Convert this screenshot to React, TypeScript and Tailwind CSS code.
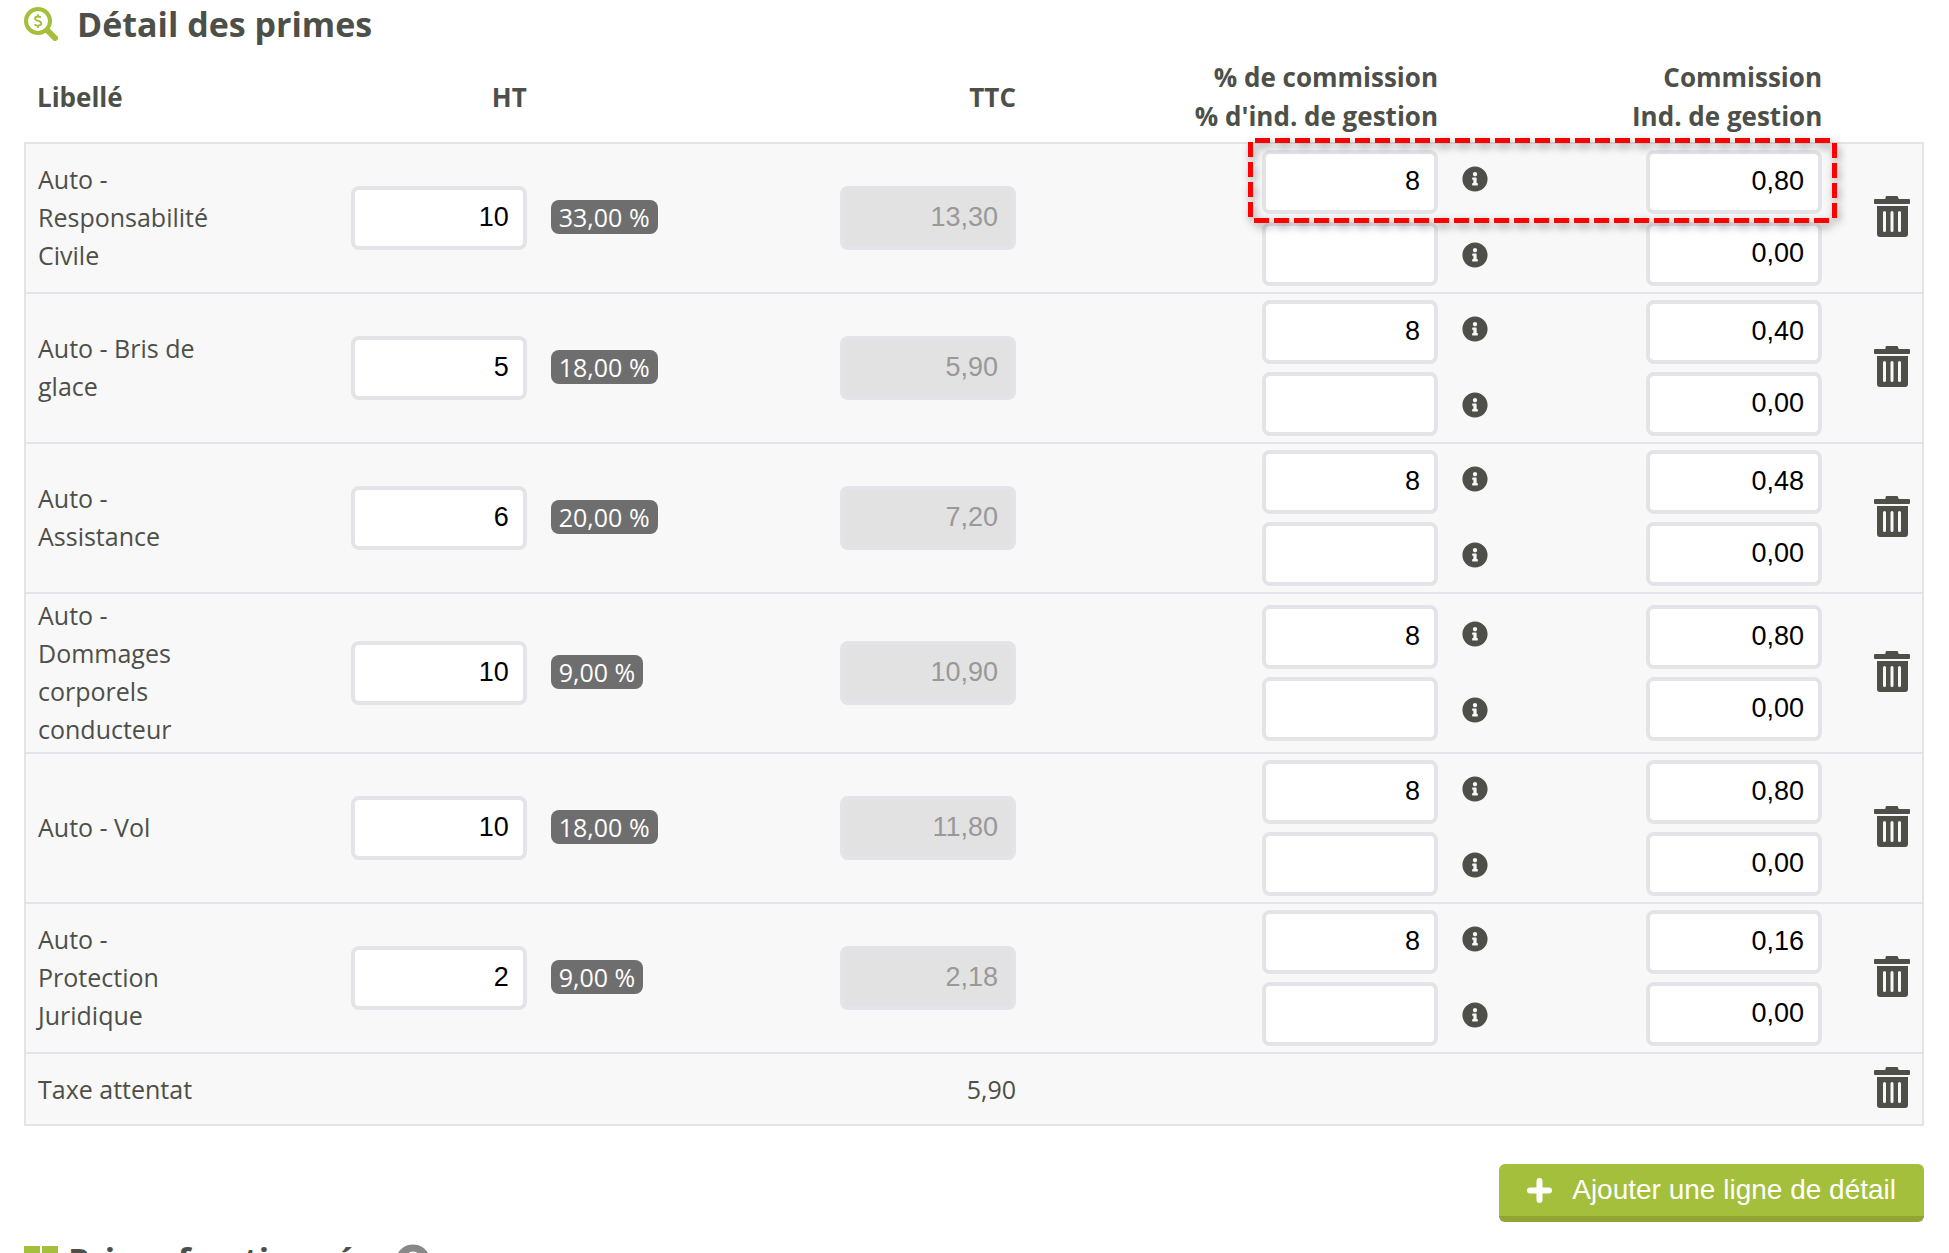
import React from "react";

type Line = {
  label: string;
  ht: string;
  rate: string;
  ttc: string;
  percent: string;
  commission: string;
  fee: string;
};

const LINES: Line[] = [
  { label: "Auto - Responsabilité Civile", ht: "10", rate: "33,00 %", ttc: "13,30", percent: "8", commission: "0,80", fee: "0,00" },
  { label: "Auto - Bris de glace", ht: "5", rate: "18,00 %", ttc: "5,90", percent: "8", commission: "0,40", fee: "0,00" },
  { label: "Auto - Assistance", ht: "6", rate: "20,00 %", ttc: "7,20", percent: "8", commission: "0,48", fee: "0,00" },
  { label: "Auto - Dommages corporels conducteur", ht: "10", rate: "9,00 %", ttc: "10,90", percent: "8", commission: "0,80", fee: "0,00" },
  { label: "Auto - Vol", ht: "10", rate: "18,00 %", ttc: "11,80", percent: "8", commission: "0,80", fee: "0,00" },
  { label: "Auto - Protection Juridique", ht: "2", rate: "9,00 %", ttc: "2,18", percent: "8", commission: "0,16", fee: "0,00" },
];

function SearchDollarIcon() {
  return (
    <svg className="size-[34px] shrink-0" viewBox="0 0 34 34" fill="none" aria-hidden="true">
      <path d="M23 23l8 8" stroke="#a4bf3b" strokeWidth="6" strokeLinecap="round" />
      <circle cx="14" cy="14" r="12" fill="white" stroke="#a4bf3b" strokeWidth="4" />
      <path
        d="M17 10.500c-.8-.8-1.800-1-3-1-1.900 0-3 .8-3 2.100 0 3 6.300 1.500 6.300 4.700 0 1.500-1.300 2.300-3.300 2.300-1.400 0-2.600-.4-3.400-1.300M14 7.200v2.300M14 18.600v2.300"
        stroke="#a4bf3b"
        strokeWidth="1.800"
      />
    </svg>
  );
}

function InfoIcon() {
  return (
    <svg className="size-[26px]" viewBox="0 0 512 512" aria-hidden="true">
      <path
        fill="#4d4f48"
        d="M256 8C119 8 8 119.100 8 256c0 137 111 248 248 248s248-111 248-248C504 119.100 393 8 256 8zm0 110c23.200 0 42 18.800 42 42s-18.800 42-42 42-42-18.800-42-42 18.800-42 42-42zm56 254c0 6.600-5.400 12-12 12h-88c-6.600 0-12-5.400-12-12v-24c0-6.600 5.400-12 12-12h12v-64h-12c-6.600 0-12-5.400-12-12v-24c0-6.600 5.400-12 12-12h64c6.600 0 12 5.400 12 12v100h12c6.600 0 12 5.400 12 12v24z"
      />
    </svg>
  );
}

function TrashButton({ label }: { label: string }) {
  return (
    <button type="button" aria-label={"Supprimer " + label} className="block cursor-pointer">
      <svg className="h-[42px] w-9" viewBox="0 0 36 42" aria-hidden="true">
        <path fill="#4d4f48" d="M12.500 0h10.500a1 1 0 0 1 1 1l.8 2H35a1 1 0 0 1 1 1v3a1 1 0 0 1-1 1H1a1 1 0 0 1-1-1V4a1 1 0 0 1 1-1h10.200l.5-2a1 1 0 0 1 .8-1z" />
        <path
          fill="#4d4f48"
          fillRule="evenodd"
          d="M3 10h31v28a3 3 0 0 1-3 3H6a3 3 0 0 1-3-3zM10.500 15a1.500 1.500 0 0 0-1.500 1.500v18a1.500 1.500 0 0 0 3 0v-18a1.500 1.500 0 0 0-1.500-1.500zM18 15a1.500 1.500 0 0 0-1.500 1.500v18a1.500 1.500 0 0 0 3 0v-18a1.500 1.500 0 0 0-1.500-1.500zM25.500 15a1.500 1.500 0 0 0-1.500 1.500v18a1.500 1.500 0 0 0 3 0v-18a1.500 1.500 0 0 0-1.500-1.500z"
        />
      </svg>
    </button>
  );
}

function Field({ label, value, disabled = false }: { label: string; value: string; disabled?: boolean }) {
  return (
    <input
      type="text"
      aria-label={label}
      defaultValue={value}
      disabled={disabled}
      className="block h-16 w-44 rounded-lg border-4 border-[#e3e3e8] bg-white px-3.5 pb-0.5 text-right font-[Liberation_Sans,Arial,sans-serif] text-[27px] text-black disabled:bg-[#e2e2e2] disabled:text-[#999999]"
    />
  );
}

function Highlight() {
  return (
    <svg
      className="pointer-events-none absolute -top-3 -left-3.5 h-[85px] w-[589px] overflow-visible drop-shadow-[2px_4px_4px_rgba(0,0,0,0.4)]"
      viewBox="0 0 589 85"
      fill="none"
      stroke="#ff0000"
      strokeWidth="5"
      strokeDasharray="15 5"
      aria-hidden="true"
    >
      <path d="M7 2.500H583M586.500 5V82M6 82.500H582M2.500 4V79" />
    </svg>
  );
}

export default function App() {
  return (
    <main className="h-screen overflow-hidden bg-white pr-[25px] pl-6 font-[Open_Sans,sans-serif] text-[25px] leading-[38px] text-[#4d4f48]">
      <h2 className="flex h-12 items-center gap-[19px] text-[34px] font-bold">
        <SearchDollarIcon />
        Détail des primes
      </h2>
      <table className="w-full table-fixed border-collapse">
        <colgroup>
          <col className="w-[11%]" />
          <col className="w-[305px]" />
          <col />
          <col className="w-[200px]" />
          <col className="w-[422px]" />
          <col className="w-[170px]" />
          <col className="w-[214px]" />
          <col className="w-[89px]" />
        </colgroup>
        <thead>
          <tr className="h-[95px] text-right text-[26px] leading-[39px] font-bold whitespace-nowrap">
            <th scope="col" className="px-3 pt-1 text-left">Libellé</th>
            <th scope="col" className="px-3 pt-1">HT</th>
            <td />
            <th scope="col" className="px-3 pt-1">TTC</th>
            <th scope="col" className="px-3 pt-1">% de commission<br />% d'ind. de gestion</th>
            <td />
            <th scope="col" className="px-3 pt-1">Commission<br />Ind. de gestion</th>
            <td />
          </tr>
        </thead>
        <tbody className="border-2 border-[#e3e3e8] bg-[#f8f8f8]">
          {LINES.map((line, index) => (
            <tr key={line.label} className="border-b-2 border-[#e3e3e8]">
              <td className="px-3 pt-0.5 pb-1">{line.label}</td>
              <td className="px-3">
                <div className="flex justify-end">
                  <Field label={"HT " + line.label} value={line.ht} />
                </div>
              </td>
              <td className="px-3 pb-0.5">
                <span className="block w-fit rounded-lg bg-[#6e6e6e] px-2 leading-[34px] whitespace-nowrap text-white">{line.rate}</span>
              </td>
              <td className="px-3">
                <div className="flex justify-end">
                  <Field label={"TTC " + line.label} value={line.ttc} disabled />
                </div>
              </td>
              <td className="px-3 py-1.5">
                <div className="relative ml-auto flex w-fit flex-col gap-2">
                  <Field label={"% de commission " + line.label} value={line.percent} />
                  <Field label={"% d'ind. de gestion " + line.label} value="" />
                  {index === 0 && <Highlight />}
                </div>
              </td>
              <td className="px-3 pb-0.5">
                <div className="flex flex-col gap-[50px]">
                  <InfoIcon />
                  <InfoIcon />
                </div>
              </td>
              <td className="px-3 py-1.5">
                <div className="flex flex-col items-end gap-2">
                  <Field label={"Commission " + line.label} value={line.commission} />
                  <Field label={"Ind. de gestion " + line.label} value={line.fee} />
                </div>
              </td>
              <td className="px-3 pb-0.5">
                <div className="flex justify-end">
                  <TrashButton label={line.label} />
                </div>
              </td>
            </tr>
          ))}
          <tr className="h-[72px]">
            <td className="px-3">Taxe attentat</td>
            <td />
            <td />
            <td className="px-3 text-right">5,90</td>
            <td />
            <td />
            <td />
            <td className="px-3 pb-0.5">
              <div className="flex justify-end">
                <TrashButton label="Taxe attentat" />
              </div>
            </td>
          </tr>
        </tbody>
      </table>
      <div className="mt-[38px] flex justify-end">
        <button
          type="button"
          className="flex h-[58px] cursor-pointer items-center gap-5 rounded-md border-b-6 border-[#91a534] bg-[#a4bf3b] px-7 font-[Liberation_Sans,Arial,sans-serif] text-[28px] text-white"
        >
          <svg className="size-[25px]" viewBox="0 0 25 25" aria-hidden="true">
            <path d="M12.500 3v19M3 12.500h19" stroke="white" strokeWidth="6" strokeLinecap="round" />
          </svg>
          Ajouter une ligne de détail
        </button>
      </div>
      <h2 className="mt-3.5 flex items-start gap-2.5 text-[34px] leading-[48px] font-bold">
        <svg className="mt-2.5 size-[34px]" viewBox="0 0 34 34" fill="#a4bf3b" aria-hidden="true">
          <path d="M0 0h16v16H0zM18 0h16v16H18zM0 18h16v16H0zM18 18h16v16H18z" />
        </svg>
        Prime fractionnée
        <svg className="mt-2 ml-2.5 size-9" viewBox="0 0 512 512" aria-hidden="true">
          <path fill="#888888" d="M504 256c0 137-111 248-248 248S8 393 8 256 119 8 256 8s248 111 248 248z" />
          <path d="M185 190c15-80 145-70 140 5-3 55-70 50-70 115M255 345v60" stroke="white" strokeWidth="54" fill="none" />
        </svg>
      </h2>
    </main>
  );
}
